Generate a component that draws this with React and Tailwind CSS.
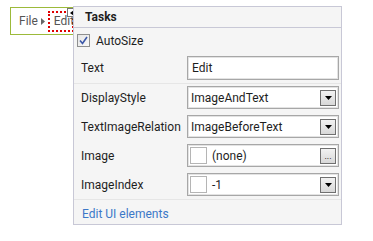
import React from "react";

const font = { fontFamily: 'Roboto, "Noto Sans", sans-serif' };

const Arrow = () => (
  <span className="flex h-[16px] w-[16px] items-center justify-center border border-[#707070] bg-gradient-to-b from-[#f2f2f2] to-[#d8d8d8]">
    <svg width="7" height="4" viewBox="0 0 7 4">
      <path d="M0 0H7L3.5 4Z" fill="#000" />
    </svg>
  </span>
);

const Combo = ({ value, swatch }) => (
  <div className="flex h-[23px] w-[152px] items-center border border-[#a7a7a7] bg-white pr-[2px] shadow-[inset_0_0_0_1px_#e3e3e3]">
    {swatch && <div className="ml-[2px] mr-[5px] h-[17px] w-[17px] border border-[#b5b5b5]" />}
    <span className={`flex-1 text-[12px] text-[#1e1e1e] ${swatch ? "" : "pl-[3px]"}`}>{value}</span>
    <Arrow />
  </div>
);

const Row = ({ label, children }) => (
  <div className="flex items-center">
    <span className="w-[113px] pl-[7px] text-[12px] text-[#1e1e1e]">{label}</span>
    {children}
  </div>
);

export default function App() {
  return (
    <div className="relative h-[241px] w-[373px] overflow-hidden bg-white" style={font}>
      <div className="ml-[10px] mt-[7px] flex h-[28px] w-[90px] items-center border border-[#9cba3a] pl-[8px]">
        <span className="text-[12px] text-[#555]">File</span>
        <svg className="ml-[3px]" width="4" height="7" viewBox="0 0 4 7">
          <path d="M0 0L4 3.5L0 7Z" fill="#666" />
        </svg>
        <div className="ml-[3px] flex h-[21px] w-[26px] items-center border-2 border-dotted border-[#e00000] pl-[4px]">
          <span className="text-[12px] text-[#555]">Edit</span>
        </div>
      </div>

      <div className="absolute left-[67px] top-[8px] flex h-[9px] w-[9px] items-center justify-center border border-[#777] bg-white">
        <svg width="4" height="6" viewBox="0 0 4 6">
          <path d="M4 0V6L0 3Z" fill="#000" />
        </svg>
      </div>

      <div className="absolute left-[73px] top-[6px] flex h-[219px] w-[269px] flex-col border border-[#c8c8d6] bg-[#f5f5f5]">
        <div className="flex h-[21px] shrink-0 items-center border-b border-[#c8c8d6] pl-[11px]">
          <span className="text-[12px] font-bold text-[#1e1e1e]">Tasks</span>
        </div>

        <div className="flex h-[25px] shrink-0 items-center pl-[3px]">
          <span className="flex h-[13px] w-[13px] items-center justify-center border border-[#8e8f8f] bg-gradient-to-br from-[#e6e6e6] to-[#f8f8f8]">
            <svg width="9" height="9" viewBox="0 0 9 9">
              <path d="M1 4.5L3.5 7.5L8 1" stroke="#3b57a8" strokeWidth="1.6" fill="none" />
            </svg>
          </span>
          <span className="ml-[6px] text-[12px] text-[#1e1e1e]">AutoSize</span>
        </div>

        <div className="flex h-[31px] shrink-0 items-center border-b border-[#e6e6e6]">
          <Row label="Text">
            <div className="flex h-[24px] w-[152px] items-center border border-[#a7a7a7] bg-white pl-[4px] shadow-[inset_0_0_0_1px_#e3e3e3]">
              <span className="text-[12px] text-[#1e1e1e]">Edit</span>
            </div>
          </Row>
        </div>

        <div className="flex shrink-0 flex-col gap-[6px] pt-[2px]">
          <Row label="DisplayStyle">
            <Combo value="ImageAndText" />
          </Row>
          <Row label="TextImageRelation">
            <Combo value="ImageBeforeText" />
          </Row>
          <Row label="Image">
            <div className="flex h-[23px] w-[152px] items-center border border-[#a7a7a7] bg-white pr-[2px] shadow-[inset_0_0_0_1px_#e3e3e3]">
              <div className="ml-[2px] mr-[5px] h-[17px] w-[17px] border border-[#b5b5b5]" />
              <span className="flex-1 text-[12px] text-[#1e1e1e]">(none)</span>
              <span className="flex h-[16px] w-[16px] items-end justify-center border border-[#707070] bg-gradient-to-b from-[#f2f2f2] to-[#d8d8d8] pb-[2px] text-[9px] leading-none text-black">
                ...
              </span>
            </div>
          </Row>
          <Row label="ImageIndex">
            <Combo value="-1" swatch />
          </Row>
        </div>

        <div className="mt-[3px] shrink-0 border-t border-[#e6e6e6] pl-[8px] pt-[1px]">
          <span className="text-[12px] text-[#3c78c8]">Edit UI elements</span>
        </div>
      </div>
    </div>
  );
}
